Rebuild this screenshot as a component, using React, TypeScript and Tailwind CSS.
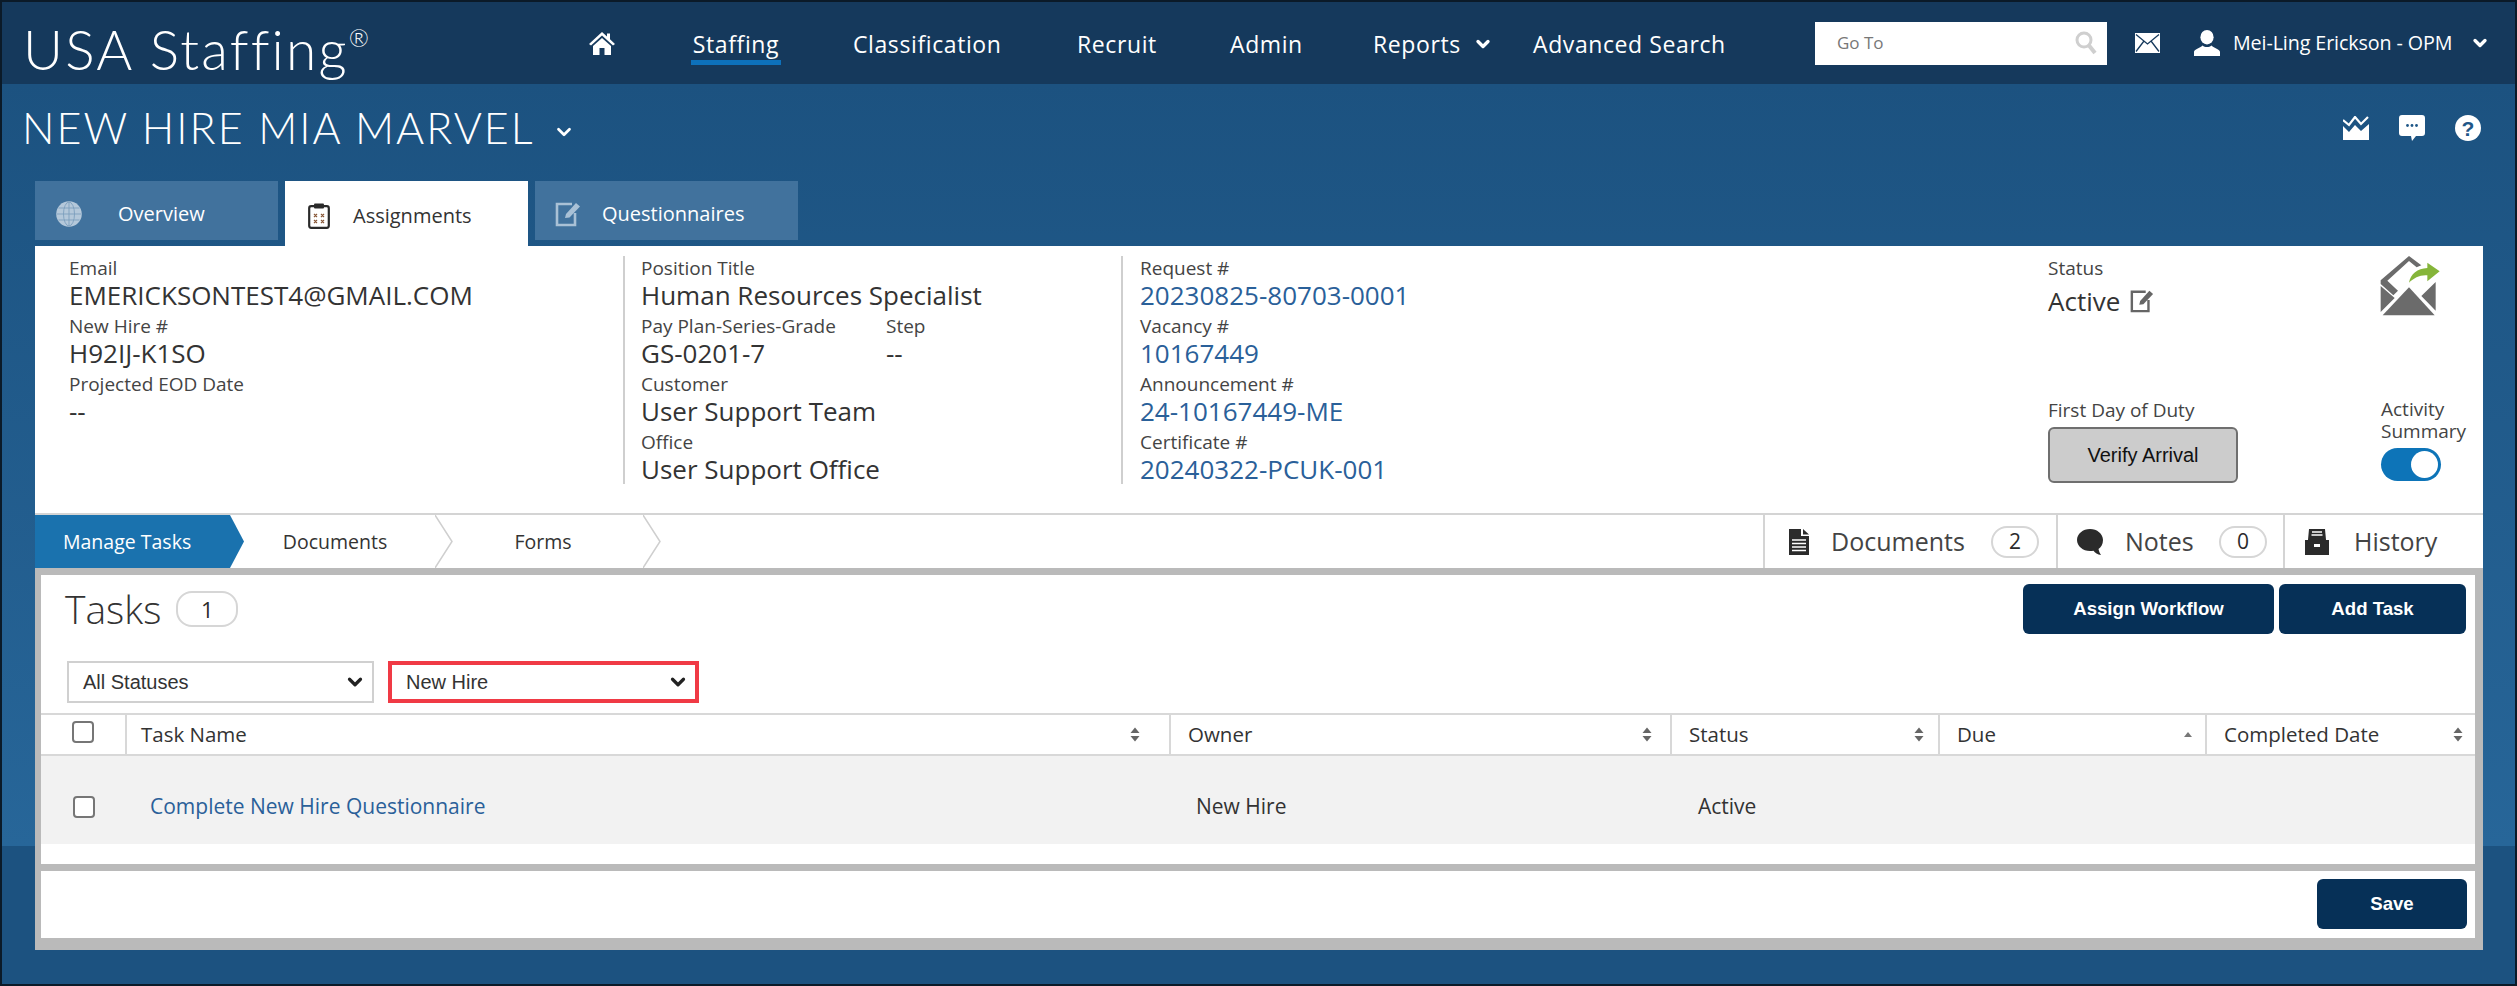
import { ChevronDown } from 'lucide-react'

const ui = "font-['Open_Sans','Noto_Sans',sans-serif]"
const arial = "font-['Liberation_Sans',Arial,sans-serif]"

const navItems = [
  { label: 'Classification', width: 'w-[224px]' },
  { label: 'Recruit', width: 'w-[153px]' },
  { label: 'Admin', width: 'w-[143px]' },
]

const columnOne = [
  { label: 'Email', value: 'EMERICKSONTEST4@GMAIL.COM' },
  { label: 'New Hire #', value: 'H92IJ-K1SO' },
  { label: 'Projected EOD Date', value: '--' },
]

const columnThree = [
  { label: 'Request #', value: '20230825-80703-0001' },
  { label: 'Vacancy #', value: '10167449' },
  { label: 'Announcement #', value: '24-10167449-ME' },
  { label: 'Certificate #', value: '20240322-PCUK-001' },
]

const headers = [
  { label: 'Task Name', width: 'w-[1044px]', pad: 'pl-[14px] pr-[29px]', sort: 'both' },
  { label: 'Owner', width: 'w-[501px]', pad: 'pl-[17px] pr-[18px]', sort: 'both' },
  { label: 'Status', width: 'w-[268px]', pad: 'pl-[17px] pr-[14px]', sort: 'both' },
  { label: 'Due', width: 'w-[267px]', pad: 'pl-[17px] pr-[12px]', sort: 'up' },
  { label: 'Completed Date', width: 'flex-1', pad: 'pl-[17px] pr-[12px]', sort: 'both' },
]

function HomeIcon() {
  return (
    <svg viewBox="0 0 26 24" className="h-[24px] w-[26px]" fill="#fff">
      <path d="M13 1 L18 5.5 V2.5 H21 V8.2 L26 13 L24 14.5 L13 4.5 L2 14.5 L0 13 Z" />
      <path d="M4 15 L13 7 L22 15 V24 H15.5 V17 H10.5 V24 H4 Z" />
    </svg>
  )
}

function MailIcon() {
  return (
    <svg viewBox="0 0 25 20" className="h-[20px] w-[25px]">
      <rect width="25" height="20" fill="#fff" />
      <path d="M1 1.5 L12.5 11 L24 1.5 M1 18.5 L9 8 M24 18.5 L16 8" fill="none" stroke="#15395c" strokeWidth="1.3" />
    </svg>
  )
}

function UserIcon() {
  return (
    <svg viewBox="0 0 26 26" className="h-[26px] w-[26px]" fill="#fff">
      <ellipse cx="13" cy="7.2" rx="6.6" ry="7.2" />
      <path d="M0 26 V22 C0 19 6 18.5 8.5 15.5 C11 17.5 15 17.5 17.5 15.5 C20 18.5 26 19 26 22 V26 Z" />
    </svg>
  )
}

function ChartIcon() {
  return (
    <svg viewBox="0 0 26 24" className="h-[24px] w-[26px]" fill="#fff">
      <path d="M0 10 L6 16 L12 9 L18 15 L26 8 V24 H0 Z" />
      <path d="M0 4 L6 9 L12 1 L18 8 L25 1" fill="none" stroke="#fff" strokeWidth="2.2" />
    </svg>
  )
}

function CommentIcon() {
  return (
    <svg viewBox="0 0 26 26" className="h-[26px] w-[26px]" fill="#fff">
      <path d="M3 0 H23 Q26 0 26 3 V18 Q26 21 23 21 H17 L13 26 L12 21 H3 Q0 21 0 18 V3 Q0 0 3 0 Z" />
      <circle cx="8.5" cy="10.5" r="1.4" fill="#1f5788" />
      <circle cx="13" cy="10.5" r="1.4" fill="#1f5788" />
      <circle cx="17.5" cy="10.5" r="1.4" fill="#1f5788" />
    </svg>
  )
}

function HelpIcon() {
  return (
    <div className="flex h-[26px] w-[26px] items-center justify-center rounded-full bg-white">
      <span className={`${arial} text-[21px] font-bold leading-none text-[#1f5788]`}>?</span>
    </div>
  )
}

function GlobeIcon() {
  return (
    <svg viewBox="0 0 26 26" className="h-[26px] w-[26px]" fill="none">
      <circle cx="13" cy="13" r="12.8" fill="#b4c8da" />
      <g stroke="#7d9fbd" strokeWidth="0.9">
        <ellipse cx="13" cy="13" rx="5.5" ry="12" />
        <path d="M13 1 V25 M1 13 H25 M2.5 7 H23.5 M2.5 19 H23.5" />
      </g>
    </svg>
  )
}

function ClipboardIcon() {
  return (
    <svg viewBox="0 0 22 26" className="h-[26px] w-[22px]">
      <rect x="1.2" y="3.2" width="19.6" height="21.6" rx="2" fill="#fff" stroke="#2a2a2a" strokeWidth="2.2" />
      <rect x="6" y="0.5" width="10" height="5" rx="1" fill="#2a2a2a" />
      <path d="M6 11 L9 14 M9 11 L6 14 M13 11 L16 14 M16 11 L13 14 M6 17 L9 20 M9 17 L6 20 M13 17 L16 20 M16 17 L13 20" stroke="#8a5a3a" strokeWidth="1.2" />
    </svg>
  )
}

function EditSquareIcon({ color, className }: { color: string; className: string }) {
  return (
    <svg viewBox="0 0 26 26" className={className} fill="none">
      <path d="M17 3 H2 V24 H20 V12" stroke={color} strokeWidth="2.6" />
      <path d="M10 17 L11 13 L21 2 L25 5.5 L14.5 16.5 Z" fill={color} />
    </svg>
  )
}

function EnvelopeForwardIcon() {
  return (
    <svg viewBox="28 22 180 180" className="ml-[1px] h-[60px] w-[60px]">
      <path d="M30 95 L115 22 L152 50 L138 56 L115 37 L50 96 L82 126 L68 140 L30 106 Z" fill="#6b6b6b" />
      <path d="M30 112 L72 148 L30 190 Z M195 100 V186 L152 142 Z" fill="#6b6b6b" />
      <path d="M115 116 L192 200 H36 Z" fill="#6b6b6b" />
      <path d="M115 102 C120 75 140 60 170 58 V42 L207 68 L170 98 V80 C148 78 130 88 115 102 Z" fill="#85b53a" />
    </svg>
  )
}

function DocIcon() {
  return (
    <svg viewBox="0 0 20 26" className="h-[26px] w-[20px]" fill="#2b2b2b">
      <path d="M0 0 H12 V7 H20 V26 H0 Z" />
      <path d="M14 0 L20 5.5 H14 Z" />
      <path d="M3 11 H17 M3 14.5 H17 M3 18 H17 M3 21.5 H17" stroke="#fff" strokeWidth="1.4" />
    </svg>
  )
}

function BubbleIcon() {
  return (
    <svg viewBox="0 0 26 26" className="h-[26px] w-[26px]" fill="#2b2b2b">
      <path d="M13 0 C20 0 26 4.8 26 11 C26 15.5 24 18 21.5 20 C22 22.5 23 24.5 24 26 C20.5 25.5 18 24 16.5 21.7 C15.4 21.9 14.2 22 13 22 C6 22 0 17.2 0 11 C0 4.8 6 0 13 0 Z" />
    </svg>
  )
}

function ArchiveIcon() {
  return (
    <svg viewBox="0 0 24 26" className="h-[26px] w-[24px]" fill="#2b2b2b">
      <path d="M4 0 H20 L21 11 H3 Z" />
      <path d="M7 3 H17 M6.5 6 H17.5" stroke="#fff" strokeWidth="1.4" />
      <path d="M0 11 H24 V26 H0 Z" />
      <rect x="9" y="15" width="6" height="3" fill="#fff" />
    </svg>
  )
}

function SearchIcon() {
  return (
    <svg viewBox="0 0 22 24" className="h-[24px] w-[22px]" fill="none" stroke="#cfcfcf">
      <circle cx="9" cy="9" r="7" strokeWidth="3" />
      <path d="M14 14.5 L20 22" strokeWidth="4" />
    </svg>
  )
}

function SortIcon({ type }: { type: string }) {
  if (type === 'up') {
    return (
      <svg viewBox="0 0 10 15" className="h-[15px] w-[10px]" fill="#777">
        <path d="M5 5 L9 10 H1 Z" />
      </svg>
    )
  }
  return (
    <svg viewBox="0 0 10 15" className="h-[15px] w-[10px]" fill="#666">
      <path d="M5 0.5 L9.5 6 H0.5 Z" />
      <path d="M5 14.5 L9.5 9 H0.5 Z" />
    </svg>
  )
}

function Pill({ value, className }: { value: string; className: string }) {
  return (
    <span className={`flex items-center justify-center rounded-[16px] border-2 border-[#d6d6d6] text-[#2b2b2b] ${className}`}>
      {value}
    </span>
  )
}

function Field({ label, value, link }: { label: string; value: string; link?: boolean }) {
  return (
    <div className="h-[58px]">
      <div className="h-[24px] whitespace-nowrap text-[19px] leading-[24px] text-[#444]">{label}</div>
      <div className={`h-[30px] whitespace-nowrap text-[26px] leading-[30px] ${link ? 'text-[#2a6099]' : 'text-[#333]'}`}>{value}</div>
    </div>
  )
}

function SelectBox({ label, className }: { label: string; className: string }) {
  return (
    <div className={`flex h-[42px] items-center justify-between pl-[14px] pr-[6px] ${arial} text-[20px] text-[#333] ${className}`}>
      <span>{label}</span>
      <ChevronDown size={22} strokeWidth={3.5} color="#222" />
    </div>
  )
}

function StepTab({ label, width, active }: { label: string; width: string; active?: boolean }) {
  if (active) {
    return (
      <div className={`relative flex h-full items-center bg-[#1a72ae] pl-[28px] text-[19.5px] text-white ${width}`}>
        {label}
        <svg viewBox="0 0 14 53" preserveAspectRatio="none" className="absolute left-full top-0 h-full w-[14px]">
          <path d="M0 0 L14 26.5 L0 53 Z" fill="#1a72ae" />
        </svg>
      </div>
    )
  }
  return (
    <div className={`relative flex h-full items-center justify-center text-[19.5px] text-[#333] ${width}`}>
      {label}
      <svg viewBox="0 0 18 53" preserveAspectRatio="none" className="absolute left-full top-0 h-full w-[18px]">
        <path d="M0 0 L17 26.5 L0 53" fill="none" stroke="#cfcfcf" strokeWidth="1.5" />
      </svg>
    </div>
  )
}

export default function App() {
  return (
    <div className={`flex h-[986px] w-[2517px] flex-col overflow-hidden border-2 border-[#0b1a28] ${ui} bg-[linear-gradient(#1c5280_82px,#276699_844px,#1c5280_844px)]`}>
      {/* top bar */}
      <header className="flex h-[82px] shrink-0 items-center bg-[#15395c] text-white">
        <div className="ml-[21px] flex w-[566px] pt-[12px] font-['Lato',sans-serif] text-[55px] font-light leading-none tracking-[2.2px]">
          USA Staffing<sup className="mt-[16px] text-[24px] leading-none">®</sup>
        </div>
        <div className="flex w-[102px]"><HomeIcon /></div>
        <nav className="flex items-center pt-[2px] text-[23px] font-medium tracking-[0.6px]">
          <div className="relative mr-[72px] flex w-[90px] justify-center">
            Staffing
            <span className="absolute left-0 right-0 top-[33px] h-[5px] bg-[#0d71bb]" />
          </div>
          {navItems.map((item) => (
            <div key={item.label} className={item.width}>{item.label}</div>
          ))}
          <div className="flex w-[160px] items-center gap-[12px]">
            Reports
            <ChevronDown size={20} strokeWidth={4} />
          </div>
          <div className="w-[282px]">Advanced Search</div>
        </nav>
        <div className="flex h-[43px] w-[292px] items-center justify-between bg-white pl-[22px] pr-[10px] text-[17px] text-[#777]">
          Go To
          <SearchIcon />
        </div>
        <div className="ml-[28px] flex w-[59px]"><MailIcon /></div>
        <UserIcon />
        <div className="ml-[13px] w-[237px] whitespace-nowrap text-[19.7px] tracking-[-0.1px]">Mei-Ling Erickson - OPM</div>
        <ChevronDown size={20} strokeWidth={4} color="#fff" />
      </header>

      <main className="flex-1">
        {/* title row */}
        <div className="flex h-[97px] items-start justify-between pl-[20px] pr-[34px] pt-[26px] text-white">
          <div className="flex items-center gap-[18px] font-['Lato',sans-serif] text-[43px] font-light leading-[36px] tracking-[2px]">
            NEW HIRE MIA MARVEL
            <ChevronDown size={22} strokeWidth={3} className="mt-[8px]" />
          </div>
          <div className="flex items-center gap-[30px] pt-[5px]">
            <ChartIcon />
            <CommentIcon />
            <HelpIcon />
          </div>
        </div>

        {/* tabs */}
        <div className="ml-[33px] flex h-[65px] gap-[7px] text-[20px]">
          <div className="flex h-[59px] w-[243px] items-center bg-[#41729d] pl-[21px] pt-[7px] text-white">
            <GlobeIcon />
            <span className="ml-[36px]">Overview</span>
          </div>
          <div className="flex h-[65px] w-[243px] items-center bg-white pl-[23px] pt-[4px] text-[#333]">
            <ClipboardIcon />
            <span className="ml-[23px]">Assignments</span>
          </div>
          <div className="flex h-[59px] w-[263px] items-center bg-[#41729d] pl-[20px] pt-[7px] text-white">
            <EditSquareIcon color="#a9c1d6" className="h-[26px] w-[26px]" />
            <span className="ml-[21px]">Questionnaires</span>
          </div>
        </div>

        {/* new hire panel */}
        <div className="ml-[33px] w-[2448px] bg-white">
          <div className="flex h-[269px] border-b-2 border-[#d4d4d4] pt-[10px]">
            <div className="w-[588px] pl-[34px]">
              {columnOne.map((f) => <Field key={f.label} {...f} />)}
            </div>
            <div className="h-[228px] w-[498px] border-l-2 border-[#cfcfcf] pl-[16px]">
              <Field label="Position Title" value="Human Resources Specialist" />
              <div className="flex">
                <div className="w-[245px]"><Field label="Pay Plan-Series-Grade" value="GS-0201-7" /></div>
                <Field label="Step" value="--" />
              </div>
              <Field label="Customer" value="User Support Team" />
              <Field label="Office" value="User Support Office" />
            </div>
            <div className="h-[228px] w-[927px] border-l-2 border-[#cfcfcf] pl-[17px]">
              {columnThree.map((f) => <Field key={f.label} {...f} link />)}
            </div>
            <div className="w-[434px]">
              <div className="flex h-[142px]">
                <div className="w-[331px]">
                  <div className="h-[24px] text-[19px] leading-[24px] text-[#444]">Status</div>
                  <div className="flex items-center gap-[10px] pt-[3px] text-[26px] leading-[36px] text-[#333]">
                    Active
                    <EditSquareIcon color="#666" className="h-[24px] w-[24px]" />
                  </div>
                </div>
                <EnvelopeForwardIcon />
              </div>
              <div className="flex">
                <div className="w-[333px]">
                  <div className="h-[24px] text-[19px] leading-[24px] text-[#444]">First Day of Duty</div>
                  <button className={`mt-[5px] h-[56px] w-[190px] rounded-[6px] border-2 border-[#6f6f6f] bg-[#cccccc] ${arial} text-[20px] text-[#111]`}>
                    Verify Arrival
                  </button>
                </div>
                <div className="text-[19px] leading-[22px] text-[#444]">
                  <div className="whitespace-nowrap">Activity</div>
                  <div className="whitespace-nowrap">Summary</div>
                  <div className="relative mt-[6px] h-[33px] w-[60px] rounded-full bg-[#0d74b8]">
                    <span className="absolute right-[3px] top-[3px] h-[27px] w-[27px] rounded-full bg-white" />
                  </div>
                </div>
              </div>
            </div>
          </div>

          {/* step row */}
          <div className="flex h-[53px] items-center">
            <StepTab label="Manage Tasks" width="w-[195px]" active />
            <StepTab label="Documents" width="w-[205px] pl-[5px]" />
            <StepTab label="Forms" width="w-[208px] pl-[8px]" />
            <div className="ml-auto flex h-full text-[25px] text-[#444]">
              <div className="flex w-[293px] items-center border-l-2 border-[#d4d4d4] pl-[24px]">
                <DocIcon />
                <span className="ml-[22px] w-[160px]">Documents</span>
                <Pill value="2" className="h-[32px] w-[48px] text-[21px]" />
              </div>
              <div className="flex w-[227px] items-center border-l-2 border-[#d4d4d4] pl-[19px]">
                <BubbleIcon />
                <span className="ml-[22px] w-[94px]">Notes</span>
                <Pill value="0" className="h-[32px] w-[48px] text-[21px]" />
              </div>
              <div className="flex w-[200px] items-center border-l-2 border-[#d4d4d4] pl-[20px]">
                <ArchiveIcon />
                <span className="ml-[25px]">History</span>
              </div>
            </div>
          </div>

          {/* tasks frame */}
          <div className="border-x-[6px] border-t-[7px] border-b-[12px] border-[#bababa] border-r-[8px] bg-[#bababa]">
            <div className="h-[289px] bg-white">
              <div className="flex h-[86px] items-start justify-between pl-[24px] pr-[9px] pt-[9px]">
                <div className="flex items-center gap-[15px]">
                  <span className="text-[39px] font-light leading-[50px] text-[#333]">Tasks</span>
                  <Pill value="1" className="h-[36px] w-[62px] text-[22px]" />
                </div>
                <div className={`flex gap-[5px] ${arial} text-[18.6px] font-bold text-white`}>
                  <button className="h-[50px] w-[251px] rounded-[6px] bg-[#063057]">Assign Workflow</button>
                  <button className="h-[50px] w-[187px] rounded-[6px] bg-[#063057]">Add Task</button>
                </div>
              </div>
              <div className="flex h-[52px] gap-[14px] pl-[26px]">
                <SelectBox label="All Statuses" className="w-[307px] border-2 border-[#d0d0d0]" />
                <SelectBox label="New Hire" className="w-[311px] border-4 border-[#f03a45]" />
              </div>
              <div className="flex h-[43px] border-y-2 border-[#d8d8d8] text-[20.5px] text-[#333]">
                <div className="flex w-[86px] items-start justify-center border-r-2 border-[#d8d8d8] pr-[1px] pt-[6px]">
                  <input type="checkbox" className="h-[22px] w-[22px] appearance-none rounded-[4px] border-2 border-[#767676] bg-white" readOnly />
                </div>
                {headers.map((h, i) => (
                  <div key={h.label} className={`flex items-center justify-between ${h.pad} ${h.width} ${i < headers.length - 1 ? 'border-r-2 border-[#d8d8d8]' : ''}`}>
                    {h.label}
                    <SortIcon type={h.sort} />
                  </div>
                ))}
              </div>
              <div className="flex h-[88px] items-center bg-[#f2f2f2] pt-[14px] text-[21px] text-[#333]">
                <div className="flex w-[86px] justify-center pr-[1px]">
                  <input type="checkbox" className="h-[22px] w-[22px] appearance-none rounded-[4px] border-2 border-[#767676] bg-white" readOnly />
                </div>
                <div className="w-[1069px] pl-[23px] text-[#2a6099]">Complete New Hire Questionnaire</div>
                <div className="w-[502px]">New Hire</div>
                <div>Active</div>
              </div>
            </div>
            <div className="mt-[7px] flex h-[67px] items-start justify-end bg-white pr-[8px] pt-[8px]">
              <button className={`h-[50px] w-[150px] rounded-[6px] bg-[#063057] ${arial} text-[18.6px] font-bold text-white`}>Save</button>
            </div>
          </div>
        </div>
      </main>
    </div>
  )
}
